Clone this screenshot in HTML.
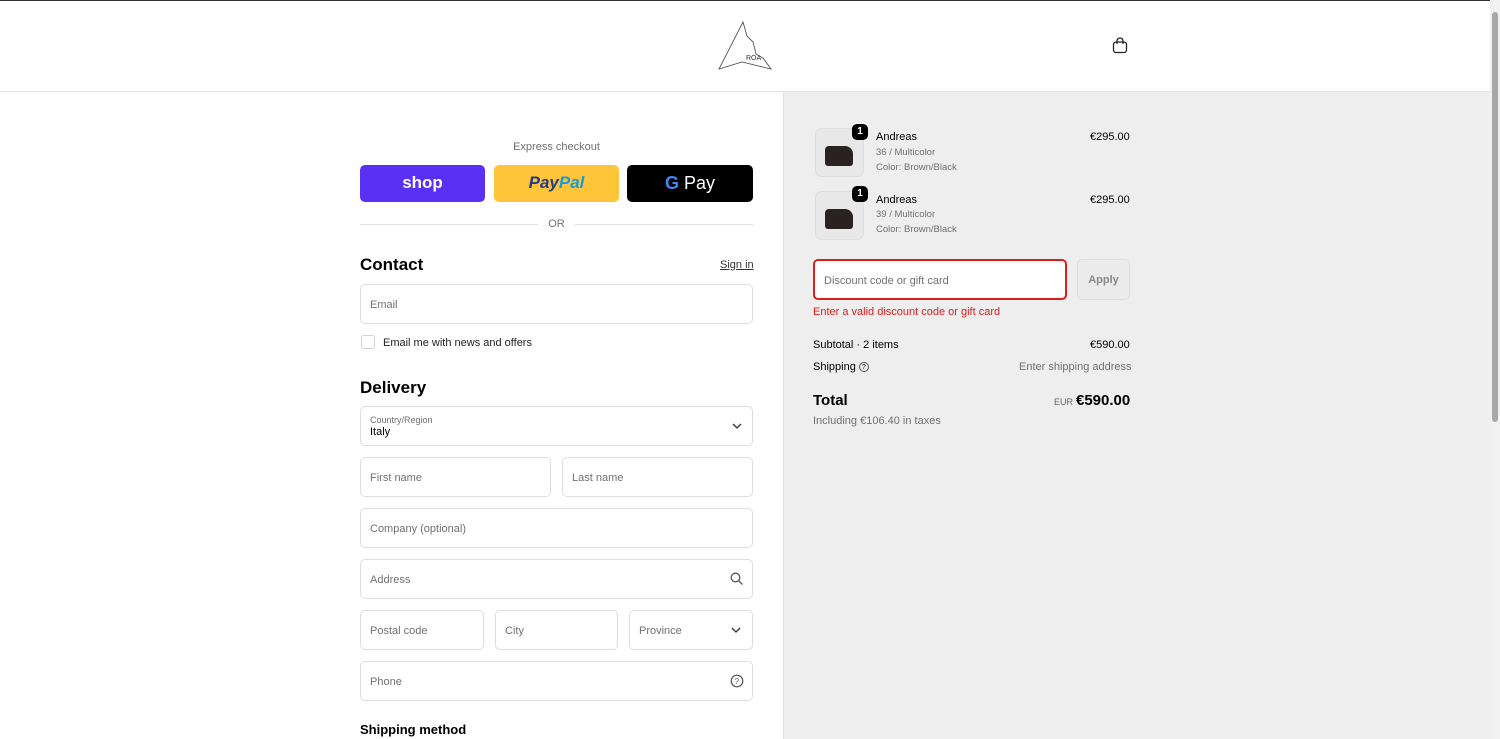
<!DOCTYPE html>
<html><head><meta charset="utf-8"><style>
*{box-sizing:border-box;margin:0;padding:0}
body{width:1500px;height:739px;overflow:hidden;font-family:"Liberation Sans",sans-serif;color:#000;background:#fff;position:relative;font-size:12px}
.a{position:absolute}
.in{position:absolute;border:1px solid #dedede;border-radius:5px;background:#fff;color:#707070;font-size:11px;padding-left:9px;padding-top:2px;display:flex;align-items:center}
.g{color:#707070}
</style></head><body>
<div class="a" style="left:0;top:0;width:1490px;height:1px;background:#333"></div>
<div class="a" style="left:0;top:91px;width:1490px;height:1px;background:#e3e3e3"></div>
<div class="a" style="left:783px;top:92px;width:707px;height:647px;background:#eeeeee;border-left:1px solid #e0e0e0"></div>
<div class="a" style="left:1490px;top:0;width:10px;height:739px;background:#f1f1f1"></div>
<div class="a" style="left:1492px;top:12px;width:6px;height:410px;background:#a8a8a8;border-radius:3px"></div>
<svg class="a" style="left:716px;top:20px" width="58" height="52" viewBox="0 0 58 52"><path d="M27 2 L3 49 L26 42 L55 49 L47 38 L40 34 L37 22 L31 16 Z" fill="none" stroke="#555" stroke-width="0.9"/><text x="30" y="40" font-size="7" font-family="Liberation Sans" fill="#333">ROA</text></svg>
<svg class="a" style="left:1112px;top:37px" width="16" height="17" viewBox="0 0 16 17"><rect x="1.5" y="5" width="13" height="10.5" rx="2.5" fill="none" stroke="#222" stroke-width="1.3"/><path d="M5 7V4a3 3 0 0 1 6 0v3" fill="none" stroke="#222" stroke-width="1.3"/></svg>

<div class="a g" style="left:360px;top:141px;width:393px;text-align:center;font-size:11px">Express checkout</div>
<div class="a" style="left:360px;top:165px;width:125px;height:37px;background:#5a31f4;border-radius:5px;color:#fff;font-weight:bold;font-size:17px;text-align:center;line-height:36px">shop</div>
<div class="a" style="left:494px;top:165px;width:125px;height:37px;background:#ffc439;border-radius:5px;font-weight:bold;font-style:italic;font-size:17px;text-align:center;line-height:36px"><span style="color:#253b80">Pay</span><span style="color:#179bd7">Pal</span></div>
<div class="a" style="left:627px;top:165px;width:126px;height:37px;background:#000;border-radius:5px;color:#fff;font-size:18px;text-align:center;line-height:37px"><b style="color:#4285f4">G</b> Pay</div>
<div class="a" style="left:360px;top:224px;width:178px;height:1px;background:#e0e0e0"></div>
<div class="a" style="left:575px;top:224px;width:178px;height:1px;background:#e0e0e0"></div>
<div class="a g" style="left:538px;top:218px;width:37px;text-align:center;font-size:11px">OR</div>
<div class="a" style="left:360px;top:255px;font-size:17px;font-weight:bold">Contact</div>
<div class="a" style="left:720px;top:259px;font-size:11px;text-decoration:underline;color:#333">Sign in</div>
<div class="in" style="left:360px;top:284px;width:393px;height:40px">Email</div>
<div class="a" style="left:361px;top:335px;width:14px;height:14px;border:1px solid #d0d0d0;border-radius:3px"></div>
<div class="a" style="left:383px;top:337px;font-size:11px;color:#222">Email me with news and offers</div>
<div class="a" style="left:360px;top:378px;font-size:17px;font-weight:bold">Delivery</div>
<div class="in" style="left:360px;top:406px;width:393px;height:40px;display:block;padding-top:8px"><div style="font-size:9px">Country/Region</div><div style="color:#000;font-size:11px;margin-top:1px">Italy</div></div>
<svg class="a" style="left:732px;top:423px" width="10" height="7"><path d="M1 1l4 4 4-4" fill="none" stroke="#333" stroke-width="1.3"/></svg>
<div class="in" style="left:360px;top:457px;width:191px;height:40px">First name</div>
<div class="in" style="left:562px;top:457px;width:191px;height:40px">Last name</div>
<div class="in" style="left:360px;top:508px;width:393px;height:40px">Company (optional)</div>
<div class="in" style="left:360px;top:559px;width:393px;height:40px">Address</div>
<svg class="a" style="left:730px;top:572px" width="14" height="14"><circle cx="5.5" cy="5.5" r="4.3" fill="none" stroke="#555" stroke-width="1.3"/><path d="M8.8 8.8l3.7 3.7" stroke="#555" stroke-width="1.3"/></svg>
<div class="in" style="left:360px;top:610px;width:124px;height:40px">Postal code</div>
<div class="in" style="left:495px;top:610px;width:123px;height:40px">City</div>
<div class="in" style="left:629px;top:610px;width:124px;height:40px">Province</div>
<svg class="a" style="left:731px;top:627px" width="10" height="7"><path d="M1 1l4 4 4-4" fill="none" stroke="#333" stroke-width="1.3"/></svg>
<div class="in" style="left:360px;top:661px;width:393px;height:40px">Phone</div>
<svg class="a" style="left:730px;top:674px" width="14" height="14"><circle cx="7" cy="7" r="5.8" fill="none" stroke="#555" stroke-width="1.2"/><text x="4.6" y="10" font-size="8" fill="#555" font-family="Liberation Sans">?</text></svg>
<div class="a" style="left:360px;top:722px;font-size:13px;font-weight:bold">Shipping method</div>

<div class="a" style="left:815px;top:128px;width:49px;height:49px;border:1px solid #ddd;border-radius:7px;background:#e8e8e8"></div>
<div class="a" style="left:825px;top:146px;width:28px;height:20px;background:#2a2220;border-radius:4px 8px 3px 3px"></div>
<div class="a" style="left:852px;top:124px;width:16px;height:16px;background:#000;color:#fff;border-radius:5px;font-size:10px;font-weight:bold;text-align:center;line-height:16px">1</div>
<div class="a" style="left:876px;top:131px;font-size:11px">Andreas</div>
<div class="a g" style="left:876px;top:147px;font-size:9.5px">36 / Multicolor</div>
<div class="a g" style="left:876px;top:162px;font-size:9.5px">Color: Brown/Black</div>
<div class="a" style="left:1090px;top:131px;font-size:11px">€295.00</div>
<div class="a" style="left:815px;top:191px;width:49px;height:49px;border:1px solid #ddd;border-radius:7px;background:#e8e8e8"></div>
<div class="a" style="left:825px;top:209px;width:28px;height:20px;background:#2a2220;border-radius:4px 8px 3px 3px"></div>
<div class="a" style="left:852px;top:186px;width:16px;height:16px;background:#000;color:#fff;border-radius:5px;font-size:10px;font-weight:bold;text-align:center;line-height:16px">1</div>
<div class="a" style="left:876px;top:194px;font-size:11px">Andreas</div>
<div class="a g" style="left:876px;top:209px;font-size:9.5px">39 / Multicolor</div>
<div class="a g" style="left:876px;top:224px;font-size:9.5px">Color: Brown/Black</div>
<div class="a" style="left:1090px;top:194px;font-size:11px">€295.00</div>
<div class="in" style="left:813px;top:259px;width:254px;height:41px;border:2px solid #dd1d1d">Discount code or gift card</div>
<div class="a" style="left:1077px;top:259px;width:53px;height:41px;border:1px solid #ddd;border-radius:5px;background:#ebebeb;color:#888;font-size:11px;font-weight:bold;text-align:center;line-height:41px">Apply</div>
<div class="a" style="left:813px;top:306px;font-size:11px;color:#dd1d1d">Enter a valid discount code or gift card</div>
<div class="a" style="left:813px;top:339px;font-size:11px">Subtotal · 2 items</div>
<div class="a" style="left:1090px;top:339px;font-size:11px">€590.00</div>
<div class="a" style="left:813px;top:361px;font-size:11px">Shipping <span style="display:inline-block;width:10px;height:10px;border:1px solid #555;border-radius:50%;font-size:7px;text-align:center;line-height:9px;vertical-align:middle">?</span></div>
<div class="a g" style="left:1019px;top:361px;font-size:11px">Enter shipping address</div>
<div class="a" style="left:813px;top:392px;font-size:15px;font-weight:bold">Total</div>
<div class="a" style="left:1054px;top:397px;font-size:9px;color:#666">EUR</div>
<div class="a" style="left:1076px;top:392px;font-size:15px;font-weight:bold">€590.00</div>
<div class="a g" style="left:813px;top:415px;font-size:11px">Including €106.40 in taxes</div>
</body></html>
